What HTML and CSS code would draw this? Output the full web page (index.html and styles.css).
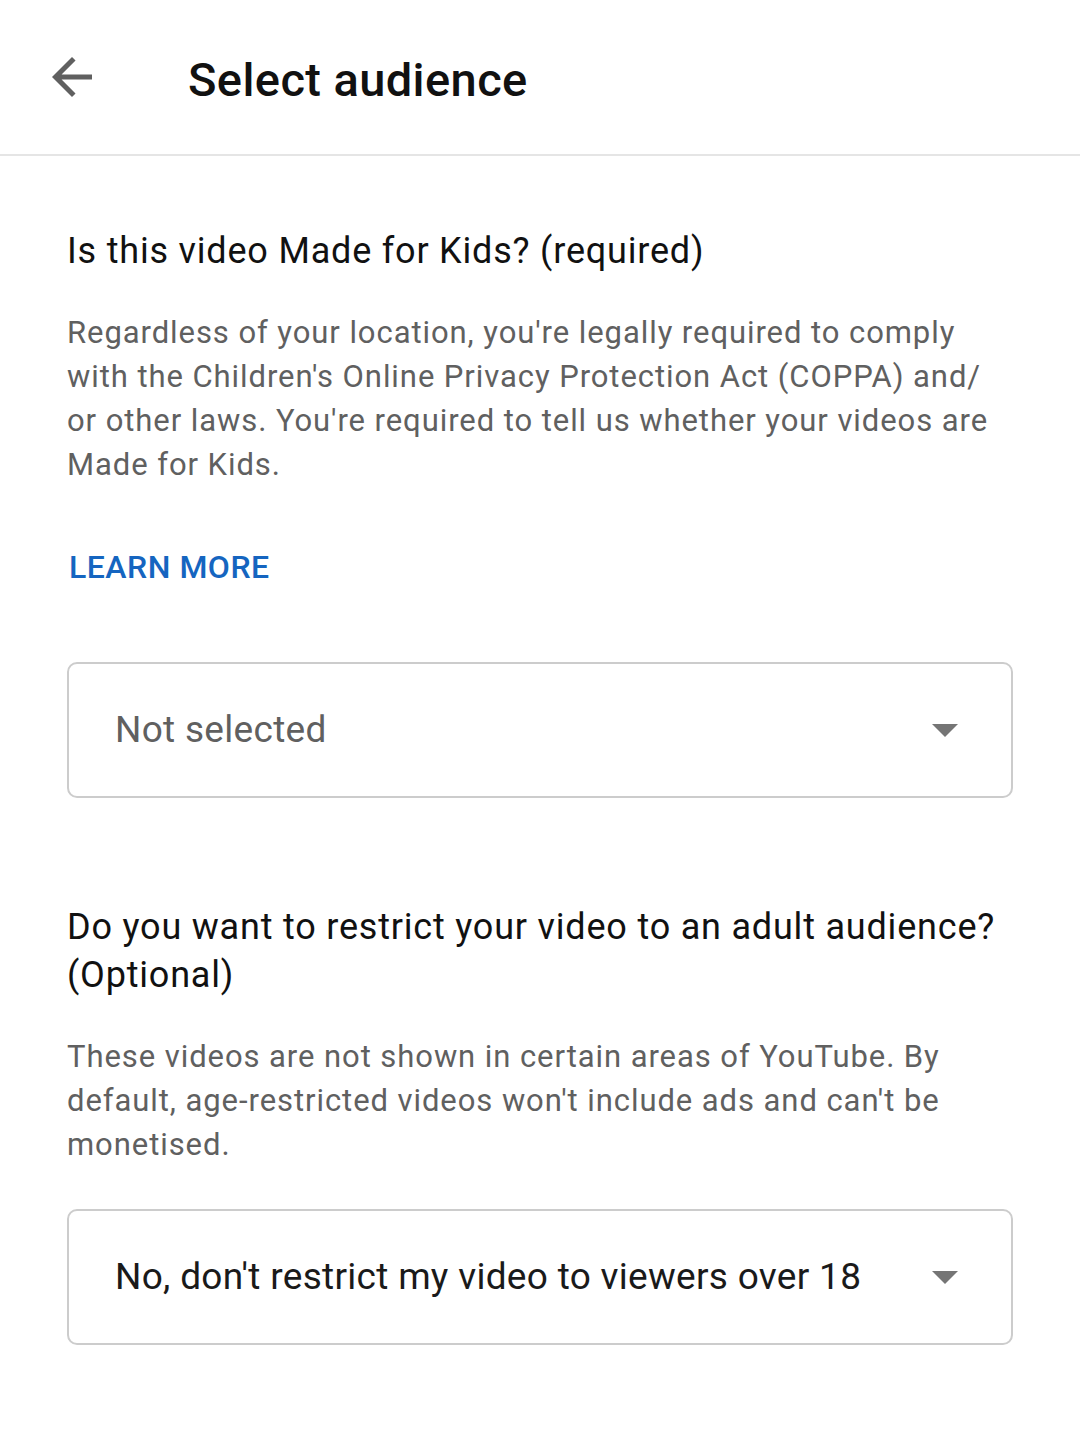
FILE: index.html
```html
<!DOCTYPE html>
<html lang="en">
<head>
<meta charset="utf-8">
<title>Select audience</title>
<link rel="stylesheet" href="styles.css">
</head>
<body>
<header class="topbar">
  <svg class="back" viewBox="0 0 24 24" aria-hidden="true"><path d="M20 11H7.83l5.59-5.59L12 4l-8 8 8 8 1.41-1.41L7.83 13H20v-2z"/></svg>
  <h1 class="title">Select audience</h1>
</header>
<main class="content">
  <section class="block">
    <h2 class="question">Is this video Made for Kids? (required)</h2>
    <p class="desc">Regardless of your location, you're legally required to comply with the Children's Online Privacy Protection Act (COPPA) and/ or other laws. You're required to tell us whether your videos are Made for Kids.</p>
    <a class="link" href="#">LEARN MORE</a>
    <div class="select">
      <span class="value muted">Not selected</span>
      <span class="caret"></span>
    </div>
  </section>
  <section class="block second">
    <h2 class="question">Do you want to restrict your video to an adult audience? (Optional)</h2>
    <p class="desc">These videos are not shown in certain areas of YouTube. By default, age-restricted videos won't include ads and can't be monetised.</p>
    <div class="select tight">
      <span class="value">No, don't restrict my video to viewers over 18</span>
      <span class="caret"></span>
    </div>
  </section>
</main>
</body>
</html>
```

FILE: styles.css
```css
html, body {
  margin: 0;
  padding: 0;
  background: #ffffff;
}
body {
  font-family: Roboto, "Noto Sans", "Liberation Sans", sans-serif;
  color: #111111;
  width: 1080px;
  min-height: 1431px;
}
.topbar {
  border-bottom: 2px solid #e5e5e5;
  display: flex;
  align-items: flex-start;
  padding: 47px 0 0 42px;
  height: 107px;
}
.back {
  width: 60px;
  height: 60px;
  fill: #606060;
  flex: none;
}
.title {
  margin: 5px 0 0 86px;
  font-size: 47px;
  font-weight: 500;
  line-height: 56px;
  letter-spacing: 0.4px;
  color: #111111;
}
.content {
  padding: 0 67px;
}
.block {
  display: flex;
  flex-direction: column;
  align-items: flex-start;
}
.question {
  margin: 71px 0 0;
  font-size: 36px;
  font-weight: 400;
  line-height: 48px;
  letter-spacing: 0.8px;
  color: #111111;
}
.second .question {
  margin-top: 105px;
}
.desc {
  margin: 36px 0 0;
  font-size: 31px;
  line-height: 44px;
  letter-spacing: 0.93px;
  color: #606060;
}
.link {
  margin: 58px 0 0 2px;
  font-size: 32px;
  line-height: 44px;
  font-weight: 500;
  letter-spacing: 0.5px;
  color: #1565c0;
  text-decoration: none;
}
.select {
  align-self: stretch;
  margin-top: 73px;
  height: 136px;
  box-sizing: border-box;
  border: 2px solid #cccccc;
  border-radius: 10px;
  display: flex;
  align-items: center;
  justify-content: space-between;
  padding: 0 53px 0 46px;
}
.select.tight {
  margin-top: 42px;
}
.value {
  font-size: 37px;
  line-height: 44px;
  letter-spacing: 0.3px;
  color: #1a1a1a;
}
.value.muted {
  color: #606060;
}
.caret {
  width: 0;
  height: 0;
  border-left: 13px solid transparent;
  border-right: 13px solid transparent;
  border-top: 13px solid #757575;
}
```
